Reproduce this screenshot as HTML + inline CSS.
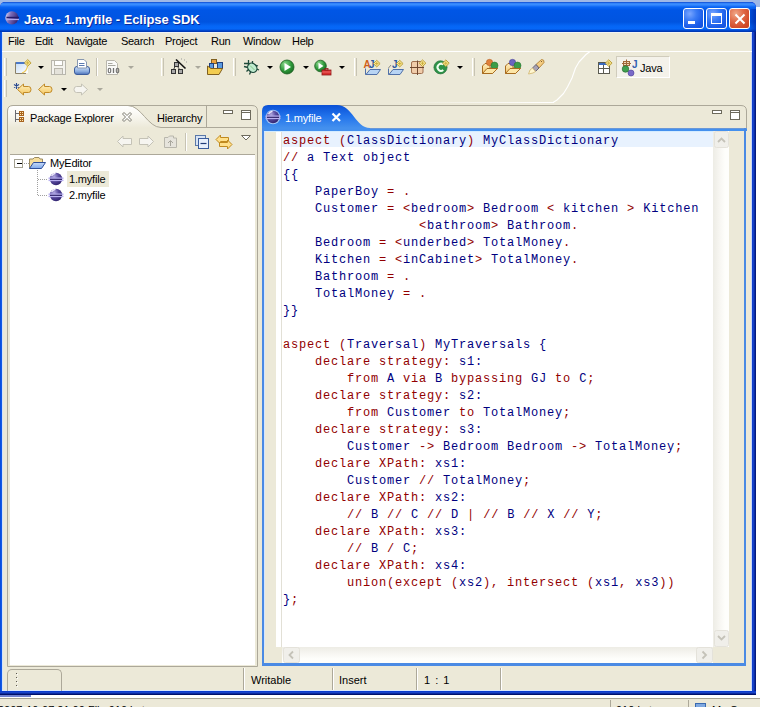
<!DOCTYPE html>
<html><head><meta charset="utf-8">
<style>
*{margin:0;padding:0;box-sizing:border-box}
html,body{width:760px;height:707px;overflow:hidden;background:#ECE9D8;font-family:"Liberation Sans",sans-serif;font-size:11px;color:#000;position:relative}
.a{position:absolute}
svg{position:absolute;overflow:visible}
#bgtop{left:0;top:0;width:760px;height:8px;background:#9FB8E6}
#bgright{left:756px;top:7px;width:4px;height:691px;background:#FFFFFF}
#win{left:0;top:2px;width:756px;height:693px;background:#0831D9;border-radius:5px 5px 0 0}
#title{left:0;top:2px;width:756px;height:30px;border-radius:5px 6px 0 0;
 background:linear-gradient(#0840C8 0px,#2A78F4 1px,#3C90FF 2px,#3488FF 3px,#0A64F4 5px,#0056E6 8px,#0054E0 20px,#0566F6 24px,#0668F8 27px,#0048D0 28.5px,#0030A8 30px)}
#ttext{left:24px;top:12px;letter-spacing:-0.05px;color:#fff;font-weight:bold;font-size:13px;text-shadow:1px 1px 0 #0A2A9C;white-space:nowrap;line-height:15px}
#client{left:2px;top:32px;width:750px;height:659px;background:#ECE9D8}
#rborder{left:751px;top:32px;width:1px;height:659px;background:#C9D7F4}
#bborder{left:2px;top:690px;width:750px;height:1px;background:#DCE8FA}
#rblue{left:752px;top:32px;width:4px;height:663px;background:linear-gradient(90deg,#0A3CD0,#1A44C8,#0A2AA0,#00106A)}
#bblue{left:0;top:691px;width:756px;height:4px;background:linear-gradient(#0A3CD0 0,#0A3CD0 25%,#1A44C8 25%,#1A44C8 50%,#0A2AA0 50%,#0A2AA0 75%,#00106A 75%)}
.menu{top:35px;white-space:nowrap;font-size:11px;line-height:12px;letter-spacing:-0.3px}
#menuline{left:2px;top:51px;width:750px;height:1px;background:#fff}
.handle{width:3px;border-left:1px solid #fff;border-right:1px solid #C7C3B3;background:#ECE9D8}
.sep{width:2px;border-left:1px solid #C7C3B3;border-right:1px solid #fff}
.dd{width:0;height:0;border-left:3px solid transparent;border-right:3px solid transparent;border-top:3px solid #000}
.ddg{width:0;height:0;border-left:3px solid transparent;border-right:3px solid transparent;border-top:3px solid #AAA89C}
.cb{width:21px;height:21px;border:1px solid #fff;border-radius:3px;background:radial-gradient(circle at 30% 25%,#7AA6FF 0,#3A7BF5 35%,#1A5CE8 70%,#1450D8 100%)}
.cl{background:radial-gradient(circle at 30% 25%,#F0A888 0,#E06A48 40%,#D24A28 75%,#C8401E 100%)}
/* panels */
.pframe{background:#ECE9D8;border:1px solid #ACA899}
.tree{font-size:11px;white-space:nowrap;line-height:12px;letter-spacing:-0.2px}
.code{font-family:"Liberation Mono",monospace;font-size:12px;letter-spacing:0.8px;line-height:17px;white-space:pre;color:#000080}
.k{color:#920000}
.status{font-size:11px;white-space:nowrap;line-height:12px}
</style></head>
<body>
<div class="a" id="bgtop"></div>
<div class="a" id="bgright"></div>
<div class="a" id="win"></div>
<div class="a" id="title"></div>
<div class="a" style="left:748px;top:9px;width:8px;height:23px;background:linear-gradient(90deg,rgba(0,40,180,0),rgba(0,30,150,0.6));border-radius:0 0 0 0"></div>
<div class="a" id="ttext">Java - 1.myfile - Eclipse SDK</div>

<!-- title icon -->
<svg style="left:4px;top:11px" width="16" height="14" viewBox="0 0 16 14">
<defs><linearGradient id="eg" x1="0" y1="0" x2="1" y2="0.3"><stop offset="0" stop-color="#F0ECFF"/><stop offset="0.2" stop-color="#B8B0E0"/><stop offset="0.45" stop-color="#7A6CB8"/><stop offset="1" stop-color="#3A2A78"/></linearGradient></defs>
<circle cx="7.9" cy="6.8" r="6.6" fill="url(#eg)"/>
<rect x="2.5" y="5.8" width="12.5" height="1.3" fill="#241A68"/>
<rect x="2.5" y="7.9" width="12.5" height="1.2" fill="#B0A8E8"/>
</svg>
<!-- caption buttons -->
<div class="a cb" style="left:683px;top:8px"><div class="a" style="left:4px;top:12px;width:7px;height:3px;background:#fff"></div></div>
<div class="a cb" style="left:706px;top:8px"><div class="a" style="left:4px;top:4px;width:11px;height:11px;border:1px solid #fff;border-top-width:3px"></div></div>
<div class="a cb cl" style="left:729px;top:8px">
<svg style="left:4px;top:4px" width="12" height="12" viewBox="0 0 12 12"><path d="M1.5 1.5L10.5 10.5M10.5 1.5L1.5 10.5" stroke="#fff" stroke-width="2"/></svg></div>
<div class="a" id="client"></div>
<div class="a" id="rborder"></div>
<div class="a" id="bborder"></div>
<div class="a" id="rblue"></div>
<div class="a" style="left:0;top:32px;width:2px;height:659px;background:linear-gradient(90deg,#0848D8,#1460EC)"></div>
<div class="a" style="left:2px;top:32px;width:1px;height:658px;background:#D4E2F8"></div>
<div class="a" id="bblue"></div>

<!-- menu -->
<div class="a menu" style="left:8px">File</div>
<div class="a menu" style="left:35px">Edit</div>
<div class="a menu" style="left:66px">Navigate</div>
<div class="a menu" style="left:121px">Search</div>
<div class="a menu" style="left:165px">Project</div>
<div class="a menu" style="left:211px">Run</div>
<div class="a menu" style="left:243px">Window</div>
<div class="a menu" style="left:292px">Help</div>
<div class="a" id="menuline"></div>
<div class="a" style="left:2px;top:32px;width:750px;height:1px;background:#F0F2F4"></div>


<!-- toolbar icons -->
<svg style="left:0;top:0" width="760" height="100">
<defs>
<linearGradient id="gwin" x1="0" y1="0" x2="1" y2="1"><stop offset="0" stop-color="#C8DEF6"/><stop offset="1" stop-color="#FFFFFF"/></linearGradient>
<radialGradient id="ggreen" cx="0.35" cy="0.3" r="0.75"><stop offset="0" stop-color="#8ED88E"/><stop offset="0.6" stop-color="#2E9A3A"/><stop offset="1" stop-color="#1C6E26"/></radialGradient>
<linearGradient id="garrow" x1="0" y1="0" x2="0" y2="1"><stop offset="0" stop-color="#FFF2C0"/><stop offset="1" stop-color="#F4C45C"/></linearGradient>
<linearGradient id="gfold" x1="0" y1="0" x2="0" y2="1"><stop offset="0" stop-color="#FFF0C0"/><stop offset="1" stop-color="#F2C46C"/></linearGradient>
<g id="spark"><path d="M3,0 L3.8,2.2 L6,3 L3.8,3.8 L3,6 L2.2,3.8 L0,3 L2.2,2.2 Z" fill="#FFF08A" stroke="#C8A030" stroke-width="0.8"/></g>
<g id="spark2"><path d="M3.25,0.3 L6.6,3.6 L3.25,6.9 L-0.1,3.6 Z" fill="#FAEC9C" stroke="#B89830" stroke-width="0.9"/><path d="M3.25,1.8V5.4M1.5,3.6H5" stroke="#C8A838" stroke-width="0.9"/></g>
<g id="arrowL"><path d="M0.5,6 L6.5,0.5 V3 H11.5 Q14,3 14,6 Q14,9 11.5,9 H6.5 V11.5 Z" fill="url(#garrow)" stroke="#C08A28" stroke-linejoin="round"/></g>
</defs>
<!-- new wizard -->
<path d="M26,73.5 H15.5 V62.5 H24" fill="none" stroke="#8A8068"/>
<rect x="16" y="63" width="12" height="10" fill="url(#gwin)"/>
<rect x="16" y="62" width="9" height="2" fill="#4A78C8"/>
<path d="M22,73 Q27,71 27.5,66" fill="none" stroke="#F0C850" stroke-width="1.2"/>
<use href="#spark2" x="24.5" y="59.3"/>
<!-- save disabled -->
<rect x="51.5" y="60.5" width="14" height="14" fill="#F4F3EE" stroke="#B8B6AC"/>
<rect x="54.5" y="60.5" width="8" height="5" fill="#FFFFFF" stroke="#B8B6AC"/>
<rect x="54.5" y="68.5" width="8" height="6" fill="#E4E2DA" stroke="#B8B6AC"/>
<!-- print -->
<defs><linearGradient id="gprn" x1="0" y1="0" x2="0" y2="1"><stop offset="0" stop-color="#D4E2F6"/><stop offset="0.6" stop-color="#8CAEE0"/><stop offset="1" stop-color="#4A70B8"/></linearGradient></defs>
<rect x="74.5" y="66.5" width="15" height="8" rx="2.5" fill="url(#gprn)" stroke="#3C5C9C"/>
<path d="M77.5,68 V59.5 H84 L86.5,62 V68 Z" fill="#fff" stroke="#8898B0"/>
<path d="M79,63.5h5.5M79,65.5h5.5" stroke="#5A7AB0"/>
<!-- 010 disabled -->
<path d="M106.5,60.5 H114.5 L117.5,63.5 V74.5 H106.5 Z" fill="#FAFAF8" stroke="#B8B6AC"/>
<path d="M108,63.5h4.5M108,65.5h7.5" stroke="#A8A8A0"/>
<rect x="108.3" y="68.3" width="2.4" height="4.4" rx="1.2" fill="none" stroke="#707070" stroke-width="1.1"/>
<path d="M113.5,68v5" stroke="#707070" stroke-width="1.3"/>
<rect x="116.3" y="68.3" width="2.4" height="4.4" rx="1.2" fill="none" stroke="#707070" stroke-width="1.1"/>
<!-- hierarchy wand -->
<path d="M176,64 L173,71 M176,64 L180.5,71" stroke="#444" />
<rect x="174.5" y="62.5" width="4" height="4" fill="#A8A8A8" stroke="#333"/>
<rect x="171.5" y="69.5" width="4" height="4" fill="#A8A8A8" stroke="#333"/>
<rect x="178.5" y="69.5" width="4" height="4" fill="#A8A8A8" stroke="#333"/>
<path d="M176,59.5 L185.5,68.5" stroke="#111" stroke-width="1.6"/>
<path d="M181,59h1M184,60h1M186,62h1" stroke="#999"/>
<!-- folder people -->
<rect x="211.5" y="59.5" width="5" height="4" fill="#E8A040" stroke="#806020"/>
<rect x="209.5" y="63.5" width="4" height="5" fill="#5A9AE0" stroke="#204080"/>
<rect x="217.5" y="62.5" width="5" height="6" fill="#5A9AE0" stroke="#204080"/>
<path d="M207.5,66 V74.5 H219 L222.5,68.5 H211 Z" fill="#F2CC50" stroke="#806020"/>
<!-- bug -->
<path d="M244,63.5 H249 M248.5,60 V65 M252.5,61 V64 M254,64.5 L258,66 M244,66.5 L248,67.5 M255.5,68.5 L259,70 M246.5,71.5 L249,69 M249.5,74.5 L251,71" stroke="#1E4A3A" stroke-width="1.3"/>
<ellipse cx="252.3" cy="67.8" rx="4.2" ry="5" fill="#C0EBCF" stroke="#1E4A3A" stroke-width="1.2" transform="rotate(-45 252.3 67.8)"/>
<path d="M250,65.5 L254.5,70" stroke="#88C888" stroke-width="1"/>
<!-- run -->
<circle cx="287" cy="67" r="7" fill="url(#ggreen)" stroke="#1C6020" stroke-width="0.8"/>
<path d="M284.5,63 L291,67 L284.5,71 Z" fill="#fff"/>
<!-- run external -->
<circle cx="320.5" cy="66" r="5.8" fill="url(#ggreen)" stroke="#1C6020" stroke-width="0.8"/>
<path d="M318.5,62.8 L323.5,66 L318.5,69.2 Z" fill="#fff"/>
<rect x="322" y="70" width="9" height="5" fill="#D83030" stroke="#901818" stroke-width="0.8"/>
<rect x="325" y="68.5" width="3" height="1.5" fill="none" stroke="#901818" stroke-width="0.8"/>
<path d="M322,72h9" stroke="#FF9090" stroke-width="0.6"/>
<!-- AJ -->
<path d="M365.5,68.5 V74.5 H377 L380.5,69.5 H370 L366,74.5" fill="#B8D4F4" stroke="#5070A8"/>
<text x="363.6" y="67.6" font-family="Liberation Sans" font-weight="bold" font-size="10" fill="#D06018">A</text>
<text x="369" y="67.6" font-family="Liberation Sans" font-weight="bold" font-size="10" fill="#2858A0">J</text>
<use href="#spark2" x="373.5" y="60"/>
<!-- J -->
<path d="M388.5,68.5 V74.5 H400 L403.5,69.5 H393 L389,74.5" fill="#B8D4F4" stroke="#5070A8"/>
<path d="M388.5,68 L391,65" stroke="#8A8A80"/>
<text x="392" y="67.6" font-family="Liberation Sans" font-weight="bold" font-size="10" fill="#2858A0">J</text>
<use href="#spark2" x="396.5" y="60"/>
<!-- grid -->
<rect x="411.5" y="61.5" width="11.5" height="12" rx="1.5" fill="#F0CCAA" stroke="#A07050"/>
<path d="M417.5,60.5 V75 M410,67.5 H424" stroke="#704830"/>
<use href="#spark2" x="419.3" y="59.6"/>
<!-- C -->
<circle cx="440.5" cy="67.3" r="6.6" fill="#2E9248" stroke="#1E6A34" stroke-width="0.6"/>
<path d="M443.3,64.6 A3.5,3.5 0 1 0 443.3,70" fill="none" stroke="#F0FFF0" stroke-width="2"/>
<use href="#spark2" x="442.6" y="59.6"/>
<!-- folder orange green -->
<path d="M482.5,73.5 V66 L485,63.5 H490 V68 H497.5 L492.5,73.5 Z" fill="url(#gfold)" stroke="#A86C20" stroke-linejoin="round"/>
<circle cx="489.5" cy="62.5" r="3.2" fill="#E0803A" stroke="#B05A20" stroke-width="0.5"/>
<circle cx="494.5" cy="65.5" r="3.5" fill="#3C9C48" stroke="#1E6A28" stroke-width="0.5"/>
<path d="M482.5,73.5 L487,68.5 H497.5 L492.5,73.5 Z" fill="#FCE6A8" stroke="#A86C20" stroke-linejoin="round"/>
<!-- folder purple green -->
<path d="M505.5,73.5 V66 L508,63.5 H513 V68 H520.5 L515.5,73.5 Z" fill="url(#gfold)" stroke="#A86C20" stroke-linejoin="round"/>
<circle cx="512.5" cy="62.5" r="3.2" fill="#6A64C0" stroke="#403A90" stroke-width="0.5"/>
<circle cx="517.5" cy="65.5" r="3.5" fill="#3C9C48" stroke="#1E6A28" stroke-width="0.5"/>
<path d="M505.5,73.5 L510,68.5 H520.5 L515.5,73.5 Z" fill="#FCE6A8" stroke="#A86C20" stroke-linejoin="round"/>
<!-- brush -->
<path d="M536,64.5 L541.5,59.5 Q544.5,59.5 544,62.5 L539,68 Z" fill="#F4CC80" stroke="#B88A40"/>
<path d="M541,61.5 h0.8" stroke="#604020" stroke-width="1.2"/>
<path d="M532.5,68 L536,64.5 L539,68 L535.5,71.5 Z" fill="#A8A2B4" stroke="#6A6474"/>
<path d="M528.5,74 L530,70 L532.5,68 L535.5,71.5 L533,73 Z" fill="#FFF6D0" stroke="#D8C080"/>
<!-- row 2 -->
<use href="#arrowL" x="17" y="83.5"/>
<path d="M16.5,83 V89 M14,84.5 L19,87.5 M19,84.5 L14,87.5" stroke="#284890" stroke-width="1.1"/>
<use href="#arrowL" x="38" y="83.5"/>
<path d="M87.5,89.5 L81.5,84 V86.5 H76.5 Q74,86.5 74,89.5 Q74,92.5 76.5,92.5 H81.5 V95 Z" fill="#F6F5F0" stroke="#C4C2B6" stroke-linejoin="round"/>
<!-- perspective -->
<rect x="598.5" y="62.5" width="11" height="11" fill="#fff" stroke="#5A5A50"/>
<rect x="599" y="63" width="10" height="2" fill="#3C6CC0"/>
<path d="M603.5,65 V73 M599,68.5 H609" stroke="#5A5A50"/>
<use href="#spark2" x="605.5" y="59.5"/>
</svg>
<!-- java perspective button -->
<div class="a" style="left:616px;top:56px;width:54px;height:22px;border:1px solid #D0CCBC;border-right-color:#fff;border-bottom-color:#fff;background:#F4F2EA"></div>
<svg style="left:0;top:0" width="760" height="100">
<rect x="623.5" y="61.5" width="6" height="4" fill="#F0D8B8" stroke="#A06838"/>
<path d="M626.5,59.5V67M622,63.5h9" stroke="#A06838"/>
<circle cx="631" cy="73" r="3" fill="#7A6AC8" stroke="#4A3A98" stroke-width="0.6"/>
<circle cx="625.5" cy="69" r="3.3" fill="#40A050" stroke="#206028" stroke-width="0.6"/>
<text x="632" y="68" font-family="Liberation Sans" font-weight="bold" font-size="10" fill="#3060B0">J</text>
</svg>
<div class="a tree" style="left:640px;top:62px">Java</div>
<!-- toolbar handles / separators -->
<div class="a handle" style="left:4px;top:58px;height:18px"></div>
<div class="a handle" style="left:4px;top:80px;height:17px"></div>
<div class="a sep" style="left:96px;top:58px;height:18px"></div>
<div class="a handle" style="left:161px;top:58px;height:18px"></div>
<div class="a handle" style="left:233px;top:58px;height:18px"></div>
<div class="a handle" style="left:354px;top:58px;height:18px"></div>
<div class="a handle" style="left:472px;top:58px;height:18px"></div>

<!-- dropdown arrows -->
<div class="a dd" style="left:38px;top:66px"></div>
<div class="a ddg" style="left:128px;top:66px"></div>
<div class="a ddg" style="left:195px;top:66px"></div>
<div class="a dd" style="left:267px;top:66px"></div>
<div class="a dd" style="left:303px;top:66px"></div>
<div class="a dd" style="left:339px;top:66px"></div>
<div class="a dd" style="left:457px;top:66px"></div>
<div class="a dd" style="left:61px;top:88px"></div>
<div class="a ddg" style="left:97px;top:88px"></div>

<!-- left panel -->
<svg style="left:0;top:0" width="760" height="707">
<defs>
<linearGradient id="tabw" x1="0" y1="0" x2="0" y2="1"><stop offset="0" stop-color="#FFFFFF"/><stop offset="0.35" stop-color="#FAF9F4"/><stop offset="1" stop-color="#ECE9D8"/></linearGradient>
<linearGradient id="tabb" x1="0" y1="0" x2="0" y2="1"><stop offset="0" stop-color="#0A50D6"/><stop offset="0.5" stop-color="#2274EC"/><stop offset="1" stop-color="#4490EE"/></linearGradient>
<linearGradient id="tlin" x1="0" y1="0" x2="1" y2="0"><stop offset="0" stop-color="#ECE9D8"/><stop offset="1" stop-color="#FFFFFF"/></linearGradient>
</defs>
<!-- left panel frame -->
<path d="M8,128 V111 Q8,106 13,106 H128 C141,106 148,128 161,128 Z" fill="url(#tabw)"/>
<path d="M7.5,666.5 V111 Q7.5,105.5 13,105.5 H252 Q257.5,105.5 257.5,111 V666.5 Z" fill="none" stroke="#ACA899"/>
<path d="M128,105.5 C141,105.5 148,127.5 161,127.5 H257" fill="none" stroke="#ACA899"/>
<path d="M206.5,106 V127" stroke="#ACA899"/>
<rect x="10" y="154" width="245" height="1" fill="#ACA899"/>
<rect x="10" y="155" width="245" height="510" fill="#fff"/>
<!-- toolbar bottom white line near perspective bar -->
<rect x="390" y="102" width="164" height="1" fill="url(#tlin)"/>
<path d="M553,102.5 L557,100 L563.5,93.5 L567.5,87 L572,78 L575.5,68 L579,62 L586,54.5 L590,51.5" fill="none" stroke="#fff" stroke-width="1.1" stroke-linejoin="round"/>
<!-- editor frame -->
<path d="M336,105.5 H741 Q746.5,105.5 746.5,111 V128" fill="none" stroke="#ACA899"/>
<path d="M262,128 V111 Q262,105 268,105 H337 C352,105 356,128 370,128 Z" fill="url(#tabb)"/>
<rect x="262" y="128" width="485" height="3" fill="#4490EE"/>
<rect x="370" y="128" width="377" height="1" fill="#6A98D8"/>
<rect x="262" y="128" width="2" height="538" fill="#4A8AE4"/>
<rect x="744" y="128" width="2" height="538" fill="#4A8AE4"/>
<rect x="262" y="663" width="484" height="3" fill="#4A8AE4"/>
</svg>
<div class="a" style="left:264px;top:131px;width:480px;height:532px;background:#fff"></div>
<div class="a" style="left:264px;top:131px;width:1px;height:532px;background:#D4E6FF"></div>
<div class="a" style="left:265px;top:131px;width:11px;height:532px;background:#ECE9D8"></div>
<div class="a" style="left:281px;top:131px;width:1px;height:516px;background:#E2E0D6"></div>
<div class="a" style="left:282px;top:132px;width:431px;height:15px;background:#E8F2FE"></div>
<div class="a" style="left:264px;top:131px;width:480px;height:1px;background:#D4ECFF"></div>
<div class="a" style="left:743px;top:131px;width:1px;height:532px;background:#D4ECFF"></div>
<div class="a" style="left:729px;top:131px;width:15px;height:532px;background:#ECE9D8"></div>
<div class="a" style="left:713px;top:131px;width:16px;height:516px;background:linear-gradient(90deg,#EDECE5,#F8F7F3 45%,#FEFEFB 75%,#FEFEFC)"></div>
<div class="a" style="left:264px;top:647px;width:18px;height:16px;background:#ECE9D8"></div>
<div class="a" style="left:282px;top:647px;width:431px;height:16px;background:linear-gradient(#EDECE5,#F8F7F3 45%,#FEFEFB 75%,#FEFEFC)"></div>
<div class="a" style="left:713px;top:647px;width:16px;height:16px;background:#ECE9D8"></div>

<!-- panel labels -->
<div class="a tree" style="left:30px;top:112px">Package Explorer</div>
<div class="a tree" style="left:157px;top:112px">Hierarchy</div>
<div class="a tree" style="left:285px;top:112px;color:#fff">1.myfile</div>
<!-- tree -->
<div class="a" style="left:14px;top:159px;width:9px;height:9px;border:1px solid #A5A293;background:#fff"><div class="a" style="left:2px;top:3px;width:5px;height:1px;background:#000"></div></div>
<div class="a" style="left:67px;top:171px;width:42px;height:16px;background:#ECE9D8"></div>
<div class="a tree" style="left:50px;top:157px">MyEditor</div>
<div class="a tree" style="left:69px;top:173px">1.myfile</div>
<div class="a tree" style="left:69px;top:189px">2.myfile</div>
<svg style="left:0;top:0" width="120" height="210">
<path d="M24,163.5h6M37.5,170v26M38,179.5h10M38,195.5h10" stroke="#A0A0A0" stroke-dasharray="1 1" fill="none"/>
</svg>
<!-- panel min/max -->
<div class="a" style="left:223px;top:110px;width:10px;height:4px;border:1px solid #6D6A5C;background:#fff"></div>
<div class="a" style="left:241px;top:110px;width:10px;height:10px;border:1px solid #6D6A5C;background:#fff"><div class="a" style="left:0;top:1px;width:8px;height:1px;background:#6D6A5C"></div></div>
<div class="a" style="left:712px;top:110px;width:10px;height:4px;border:1px solid #6D6A5C;background:#fff"></div>
<div class="a" style="left:730px;top:110px;width:10px;height:10px;border:1px solid #6D6A5C;background:#fff"><div class="a" style="left:0;top:1px;width:8px;height:1px;background:#6D6A5C"></div></div>
<!-- view menu triangle -->
<svg style="left:240px;top:134px" width="12" height="8"><path d="M1.5,1.5 H10.5 L6,6 Z" fill="#fff" stroke="#6D6A5C"/></svg>
<div class="a" style="left:185px;top:133px;width:2px;height:18px;border-left:1px solid #C7C3B3;border-right:1px solid #fff"></div>

<!-- panel icons -->
<svg style="left:0;top:0" width="760" height="707">
<defs>
<radialGradient id="gecl" cx="0.35" cy="0.3" r="0.8"><stop offset="0" stop-color="#B0A8E0"/><stop offset="0.45" stop-color="#5A4CA0"/><stop offset="1" stop-color="#2A1C68"/></radialGradient>
<g id="ecl">
<circle cx="7" cy="6.5" r="6.2" fill="url(#gecl)"/>
<path d="M2.5,3.5 Q4,1 6.5,0.8" stroke="#F4F0FF" stroke-width="1.2" fill="none"/>
<rect x="-0.5" y="5" width="15" height="1.4" fill="#B8B0F0"/>
<rect x="-0.5" y="7.2" width="15" height="1.4" fill="#B8B0F0"/>
<rect x="1" y="6.3" width="12" height="0.9" fill="#201458"/>
</g>
<linearGradient id="gfb" x1="0" y1="0" x2="0" y2="1"><stop offset="0" stop-color="#C8DCF8"/><stop offset="1" stop-color="#7EA8EC"/></linearGradient>
</defs>
<!-- package explorer icon -->
<path d="M15.5,110 V122" stroke="#6A6A70"/>
<path d="M16,113.5 H19 M16,119.5 H19" stroke="#6A6A70"/>
<rect x="19" y="111" width="5" height="5" fill="#A86420"/>
<rect x="19" y="117" width="5" height="5" fill="#A86420"/>
<path d="M20,112h1M22,112h1M20,114h1M22,114h1M20,118h1M22,118h1M20,120h1M22,120h1" stroke="#FFE8B0" stroke-width="1" transform="translate(0,0.5)"/>
<!-- close x outline (package explorer) -->
<path d="M122.5,114 L124,112.5 L127,115.5 L130,112.5 L131.5,114 L128.5,117 L131.5,120 L130,121.5 L127,118.5 L124,121.5 L122.5,120 L125.5,117 Z" fill="#fff" stroke="#7A786C"/>
<!-- editor tab icon -->
<circle cx="273" cy="117" r="7.3" fill="#fff" opacity="0.55"/>
<use href="#ecl" x="266" y="110.5"/>
<!-- editor tab close -->
<path d="M332.5,113.5 L340,121 M340,113.5 L332.5,121" stroke="#fff" stroke-width="2.2"/>
<!-- tree folder -->
<path d="M29.5,168.5 V159 H33 L34.5,157.5 H39 L40,159 H42.5 V163" fill="#F6DE9C" stroke="#9A8A60"/>
<path d="M29.5,168.5 L33.5,162.5 H45.5 L41.5,168.5 Z" fill="url(#gfb)" stroke="#30509A"/>
<!-- tree eclipse icons -->
<use href="#ecl" x="49" y="172.5"/>
<use href="#ecl" x="49" y="188.5"/>
<!-- panel toolbar icons -->
<path d="M117.5,141.5 L123,136 V138.5 H131.5 V144.5 H123 V147 Z" fill="#F6F5F0" stroke="#C4C2B6" stroke-linejoin="round"/>
<path d="M153.5,141.5 L148,136 V138.5 H139.5 V144.5 H148 V147 Z" fill="#F6F5F0" stroke="#C4C2B6" stroke-linejoin="round"/>
<path d="M164.5,147.5 V137.5 H168 L169.5,136 H173.5 V138 H176.5 V147.5 Z" fill="#E6E4DC" stroke="#B8B6AC"/>
<path d="M170.5,146 V141 M168,143 L170.5,140.5 L173,143" stroke="#A8A69C" fill="none"/>
<!-- collapse all -->
<rect x="195.5" y="135.5" width="10" height="10" fill="#D8E4F4" stroke="#5A78A8"/>
<rect x="198.5" y="138.5" width="10" height="10" fill="#E8F0FC" stroke="#3A5C9C"/>
<path d="M200.5,143.5 H206.5" stroke="#203C78" stroke-width="1.2"/>
<!-- link with editor -->
<path d="M216,139.5 L220.5,135 V137.5 H228.5 V141.5 H220.5 V144 Z" fill="#FFE08A" stroke="#C08A20" stroke-linejoin="round"/>
<path d="M232,144.5 L227.5,140 V142.5 H219.5 V146.5 H227.5 V149 Z" fill="#FFE08A" stroke="#C08A20" stroke-linejoin="round"/>
<!-- scrollbar buttons -->
<rect x="714.5" y="131.5" width="14" height="16" rx="2" fill="#F0EFEA" stroke="#E4E2DA"/>
<path d="M718,142 L721.5,138.5 L725,142" fill="none" stroke="#C4C2B8" stroke-width="1.8"/>
<rect x="714.5" y="630.5" width="14" height="16" rx="2" fill="#F0EFEA" stroke="#E4E2DA"/>
<path d="M718,636 L721.5,639.5 L725,636" fill="none" stroke="#C4C2B8" stroke-width="1.8"/>
<rect x="283.5" y="647.5" width="16" height="15" rx="2" fill="#F0EFEA" stroke="#E4E2DA"/>
<path d="M293,651.5 L289.5,655 L293,658.5" fill="none" stroke="#C4C2B8" stroke-width="1.8"/>
<rect x="696.5" y="647.5" width="16" height="15" rx="2" fill="#F0EFEA" stroke="#E4E2DA"/>
<path d="M702.5,651.5 L706,655 L702.5,658.5" fill="none" stroke="#C4C2B8" stroke-width="1.8"/>
<!-- fast view dots -->
<path d="M16,673.5h1M16,677.5h1M16,681.5h1M16,685.5h1" stroke="#5A5850"/>
<path d="M17,674.5h1M17,678.5h1M17,682.5h1M17,686.5h1" stroke="#fff"/>
</svg>
<!-- code -->
<div class="a code" style="left:283px;top:133px"><span class="k">aspect (</span>ClassDictionary<span class="k">)</span> MyClassDictionary
<span class="k">//</span> a Text object
{{
    PaperBoy <span class="k">= .</span>
    Customer <span class="k">= &lt;</span>bedroom<span class="k">&gt;</span> Bedroom <span class="k">&lt;</span> kitchen <span class="k">&gt;</span> Kitchen
                 <span class="k">&lt;</span>bathroom<span class="k">&gt;</span> Bathroom<span class="k">.</span>
    Bedroom <span class="k">= &lt;</span>underbed<span class="k">&gt;</span> TotalMoney<span class="k">.</span>
    Kitchen <span class="k">= &lt;</span>inCabinet<span class="k">&gt;</span> TotalMoney<span class="k">.</span>
    Bathroom <span class="k">= .</span>
    TotalMoney <span class="k">= .</span>
}}

<span class="k">aspect (</span>Traversal<span class="k">)</span> MyTraversals {
    <span class="k">declare strategy:</span> s1:
        <span class="k">from</span> A <span class="k">via</span> B <span class="k">bypassing</span> GJ <span class="k">to</span> C<span class="k">;</span>
    <span class="k">declare strategy:</span> s2:
        <span class="k">from</span> Customer <span class="k">to</span> TotalMoney<span class="k">;</span>
    <span class="k">declare strategy:</span> s3:
        Customer <span class="k">-&gt;</span> Bedroom Bedroom <span class="k">-&gt;</span> TotalMoney<span class="k">;</span>
    <span class="k">declare XPath:</span> xs1:
        Customer <span class="k">//</span> TotalMoney<span class="k">;</span>
    <span class="k">declare XPath:</span> xs2:
        <span class="k">//</span> B <span class="k">//</span> C <span class="k">//</span> D <span class="k">|</span> <span class="k">//</span> B <span class="k">//</span> X <span class="k">//</span> Y<span class="k">;</span>
    <span class="k">declare XPath:</span> xs3:
        <span class="k">//</span> B <span class="k">/</span> C<span class="k">;</span>
    <span class="k">declare XPath:</span> xs4:
        <span class="k">union(except (</span>xs2<span class="k">), intersect (</span>xs1<span class="k">,</span> xs3<span class="k">))</span>
}<span class="k">;</span></div>

<!-- status bar -->
<div class="a" style="left:7px;top:669px;width:55px;height:22px;border:1px solid #ACA899;border-bottom:none;border-radius:5px 5px 0 0"></div>
<div class="a" style="left:243px;top:668px;width:2px;height:22px;border-left:1px solid #ACA899;border-right:1px solid #fff"></div>
<div class="a" style="left:332px;top:668px;width:2px;height:22px;border-left:1px solid #ACA899;border-right:1px solid #fff"></div>
<div class="a" style="left:416px;top:668px;width:2px;height:22px;border-left:1px solid #ACA899;border-right:1px solid #fff"></div>
<div class="a" style="left:500px;top:668px;width:2px;height:22px;border-left:1px solid #ACA899;border-right:1px solid #fff"></div>
<div class="a status" style="left:251px;top:674px">Writable</div>
<div class="a status" style="left:339px;top:674px">Insert</div>
<div class="a status" style="left:424px;top:674px;word-spacing:2px">1 : 1</div>

<!-- bottom strip -->
<div class="a" style="left:0;top:695px;width:760px;height:3px;background:#fff"></div>
<div class="a" style="left:0;top:695px;width:31px;height:2px;background:#7080D0"></div>
<div class="a" style="left:0;top:698px;width:760px;height:1px;background:#A5A294"></div>
<div class="a" style="left:0;top:699px;width:760px;height:8px;background:#ECE9D8"></div>
<div class="a status" style="left:-2px;top:704px">2007-10-07 21:00 File 910 bytes</div>
<div class="a" style="left:610px;top:700px;width:1px;height:7px;background:#ACA899"></div>
<div class="a" style="left:688px;top:700px;width:1px;height:7px;background:#ACA899"></div>
<div class="a status" style="left:616px;top:704px">910 bytes</div>
<div class="a" style="left:695px;top:703px;width:11px;height:6px;background:#7FA8E0;border:1px solid #3A6AB0"></div>
<div class="a status" style="left:712px;top:704px">My Computer</div>
</body></html>
